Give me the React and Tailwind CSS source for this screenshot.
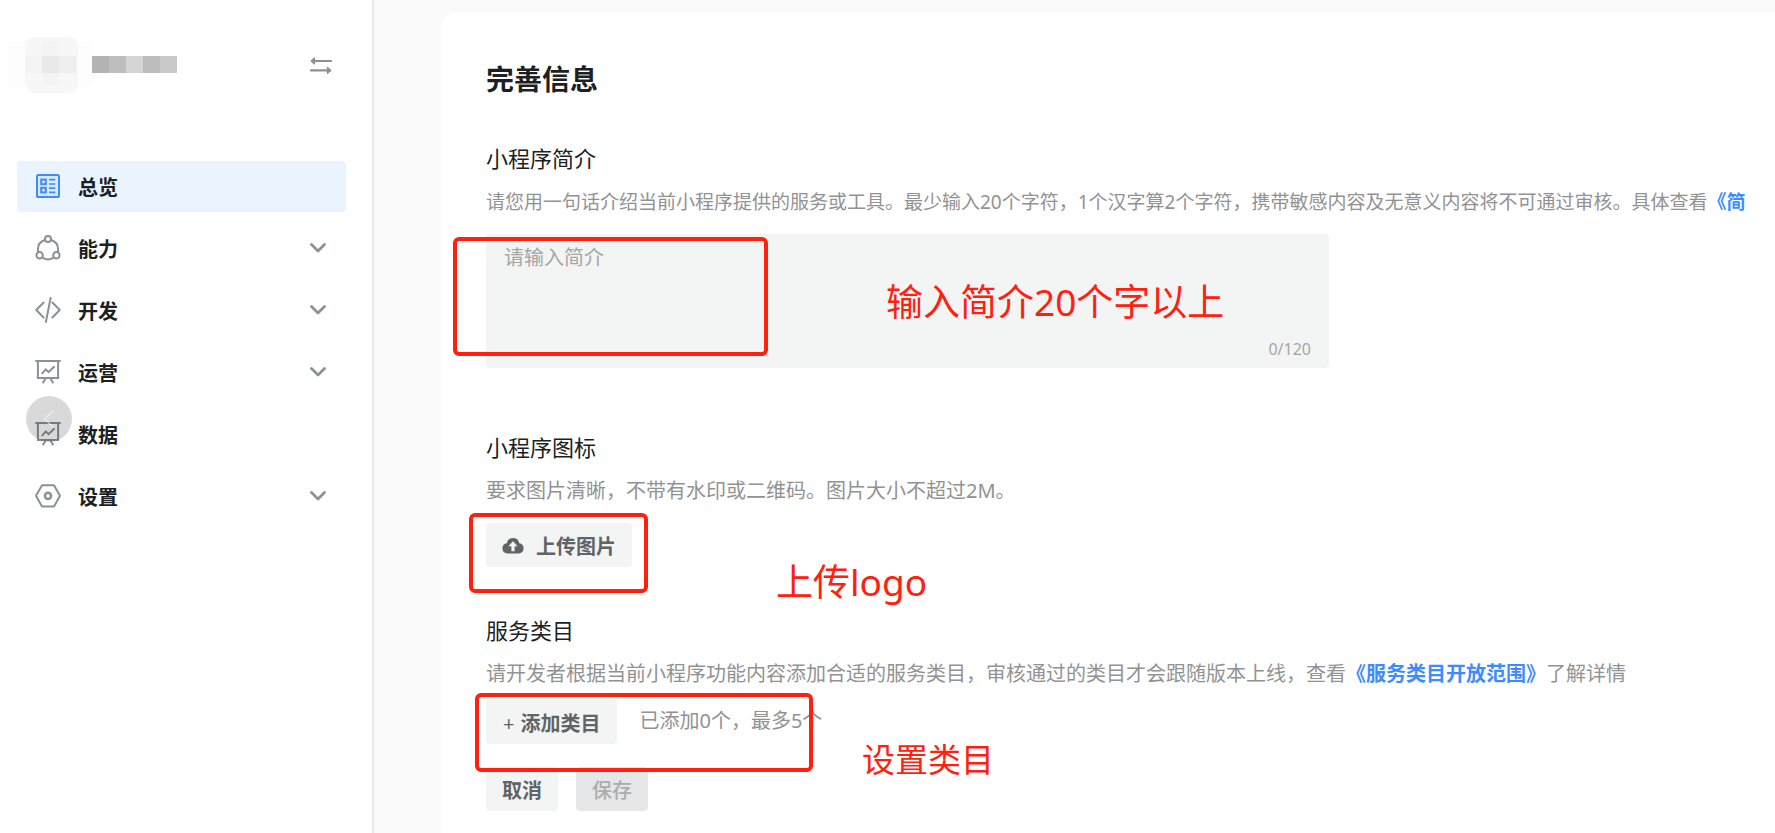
import React from "react";

function OverviewIcon() {
  return (
    <svg viewBox="0 0 26 26" className="mb-0.5 size-[26px] shrink-0 text-[#3d8bff]" fill="none" stroke="currentColor" strokeWidth="2" aria-hidden="true">
      <rect x="2" y="2" width="22" height="22" rx="1.600" fill="#d9eaff" />
      <rect x="6.200" y="6.600" width="4.600" height="4.600" />
      <rect x="6.200" y="14.800" width="4.600" height="4.600" />
      <path d="M14 6.600h6.400M14 11h6.400M14 15.200h6.400M14 19.400h6.400" strokeWidth="1.700" />
    </svg>
  );
}

function AbilityIcon() {
  return (
    <svg viewBox="0 0 26 26" className="mb-0.5 size-[26px] shrink-0" fill="none" stroke="currentColor" strokeWidth="2" aria-hidden="true">
      <circle cx="13" cy="4" r="3" />
      <circle cx="4.600" cy="20.200" r="3.200" />
      <circle cx="21.400" cy="20.200" r="3.200" />
      <path d="M10 5C5.500 6.500 3 10 3 13.500V17M16 5c4.500 1.500 7 5 7 8.500V17M7.500 22.600c3.500 2.300 7.500 2.300 11 0" />
    </svg>
  );
}

function CodeIcon() {
  return (
    <svg viewBox="0 0 26 26" className="mb-0.5 size-[26px] shrink-0" fill="none" stroke="currentColor" strokeWidth="2" strokeLinecap="round" strokeLinejoin="round" aria-hidden="true">
      <path d="M8.600 5.500 1.300 13l7.300 7.500M17.400 5.500l7.300 7.500-7.300 7.500M15.600 1l-4.700 24" />
    </svg>
  );
}

function BoardIcon() {
  return (
    <svg viewBox="0 0 26 26" className="mb-0.5 size-[26px] shrink-0" fill="none" stroke="currentColor" strokeWidth="2" aria-hidden="true">
      <path d="M.3 2h25.400M2.900 2v17h20.200V2M7.700 24.200l3-5M18.300 24.200l-3-5" />
      <path d="m6.800 14.800 4-4.400 2.800 2.800 6-6" />
    </svg>
  );
}

function SettingsIcon() {
  return (
    <svg viewBox="0 0 26 26" className="mb-0.5 size-[26px] shrink-0" fill="none" stroke="currentColor" strokeWidth="2" strokeLinejoin="round" aria-hidden="true">
      <path d="M7 2.200h12l6 10.600-6 10.600H7L1 12.800z" />
      <circle cx="13" cy="12.800" r="3.100" strokeWidth="2.500" />
    </svg>
  );
}

function ChevronDown() {
  return (
    <svg viewBox="0 0 16 10" className="mb-0.5 ml-auto h-[10px] w-4" fill="none" stroke="#8b9197" strokeWidth="2.800" strokeLinecap="round" strokeLinejoin="round" aria-hidden="true">
      <path d="M1.500 1.500 8 8l6.500-6.500" />
    </svg>
  );
}

const items = [
  { name: "总览", Icon: OverviewIcon, active: true },
  { name: "能力", Icon: AbilityIcon, more: true },
  { name: "开发", Icon: CodeIcon, more: true },
  { name: "运营", Icon: BoardIcon, more: true },
  { name: "数据", Icon: BoardIcon, collapse: true },
  { name: "设置", Icon: SettingsIcon, more: true },
];

function Sidebar() {
  return (
    <aside className="w-[374px] shrink-0 border-r-2 border-[#e7e8ec] bg-white">
      <div className="flex h-[161px] items-start pt-[37px] pl-2">
        <svg viewBox="0 0 84 56" className="h-[56px] w-[84px]" aria-hidden="true">
          <path d="M0 4h84v45H0z" fill="#fdfdfd" />
          <rect x="17" width="53" height="56" rx="9" fill="#f7f7f7" />
          <path d="M34 4h17v45H34z" fill="#f4f4f4" />
          <path d="M34 19h17v17H34z" fill="#e8e8e8" />
          <path d="M51 19h17v17H51z" fill="#efefef" />
          <path d="M17 19h17v17H17z" fill="#f4f4f4" />
        </svg>
        <svg viewBox="0 0 85 17" className="mt-[19px] h-[17px] w-[85px]" aria-hidden="true">
          <path d="M0 0h17v17H0z" fill="#b3b3b3" />
          <path d="M17 0h17v17H17z" fill="#bebebe" />
          <path d="M34 0h17v17H34z" fill="#d5d5d5" />
          <path d="M51 0h17v17H51z" fill="#bcbcbc" />
          <path d="M68 0h17v17H68z" fill="#c9c9c9" />
        </svg>
        <button type="button" aria-label="切换" className="mt-5 mr-10 ml-auto">
          <svg viewBox="0 0 22 18" className="h-[18px] w-[22px]" fill="none" stroke="#8b9197" strokeWidth="2.200" strokeLinecap="round" strokeLinejoin="round" aria-hidden="true">
            <path d="M2 4h19M1 13.400h19" />
            <path d="M4.500 1v6L1.200 4zM17.500 10.400v6l3.300-3z" fill="#8b9197" strokeWidth="1.200" />
          </svg>
        </button>
      </div>
      <nav className="flex flex-col gap-[11px] pr-[26px] pl-[17px]">
        {items.map(({ name, Icon, active, more, collapse }) => (
          <a
            key={name}
            href="#"
            className={
              active
                ? "relative flex h-[51px] items-center rounded bg-[#e9f4ff] pr-5 pl-[18px] text-[#8b9197]"
                : "relative flex h-[51px] items-center rounded pr-5 pl-[18px] text-[#8b9197]"
            }
          >
            <Icon />
            <span className="ml-[17px] pt-0.5 font-bold text-[#1c1f23]">{name}</span>
            {more && <ChevronDown />}
            {collapse && (
              <span className="absolute -top-[13px] left-[9px] flex size-[46px] items-center justify-center rounded-full bg-black/15">
                <svg viewBox="0 0 10 18" className="h-[18px] w-[10px]" fill="none" stroke="#fff" strokeWidth="1" aria-hidden="true">
                  <path d="M9.500.5.500 9l9 8.500" />
                </svg>
              </span>
            )}
          </a>
        ))}
      </nav>
    </aside>
  );
}

export default function App() {
  return (
    <div className="flex min-h-screen overflow-hidden bg-[#fafafa] font-['Noto_Sans','Noto_Sans_CJK_SC',sans-serif] text-[20px] leading-[28px] whitespace-nowrap text-[#929292]">
      <Sidebar />
      <main className="flex min-w-0 flex-1 pt-3 pl-[67px]">
        <form className="min-w-0 flex-1 rounded-tl-2xl bg-white pt-[47px] pl-[45px]">
          <h1 className="text-[28px] leading-[40px] font-bold text-[#1c1f23]">完善信息</h1>

          <section className="relative mt-[43px]">
            <label htmlFor="intro" className="block text-[22px] leading-[32px] text-[#1c1f23]">小程序简介</label>
            <p className="mt-[14px] text-[19px]">
              请您用一句话介绍当前小程序提供的服务或工具。最少输入20个字符，1个汉字算2个字符，携带敏感内容及无意义内容将不可通过审核。具体查看
              <a href="#" className="font-bold text-[#3d8bff]">《简</a>
            </p>
            <div className="relative mt-[18px] max-w-[843px]">
              <textarea id="intro" placeholder="请输入简介" className="block h-[134px] w-full resize-none rounded bg-[#f3f5f5] px-[18px] py-[10px] outline-none placeholder:text-[#a4a6a6]" />
              <span className="absolute right-[18px] bottom-[7px] text-[16px] leading-[24px] text-[#a4a6a6]">0/120</span>
            </div>
            <div className="absolute top-[95px] -left-[33px] h-[119px] w-[315px] rounded-md border-4 border-[#ff2010]" />
            <p className="absolute top-[133px] left-[400px] text-[37px] leading-[54px] text-[#ff2010]">输入简介20个字以上</p>
          </section>

          <section className="relative mt-[63px]">
            <label htmlFor="upload" className="block text-[22px] leading-[32px] text-[#1c1f23]">小程序图标</label>
            <p className="mt-[14px]">要求图片清晰，不带有水印或二维码。图片大小不超过2M。</p>
            <button id="upload" type="button" className="mt-[18px] flex h-11 items-center gap-3 rounded bg-[#f3f5f5] px-4 pt-1 font-bold text-[#606466]">
              <svg viewBox="0 0 22 18" className="mb-1 h-[18px] w-[22px]" aria-hidden="true">
                <path d="M5.300 17.500A5.200 5.200 0 0 1 4.700 7.200a6.400 6.400 0 0 1 12.600 0 5.200 5.200 0 0 1-.6 10.300z" fill="currentColor" />
                <path d="m11 5.300 4.600 4.900h-3v5H9.400v-5h-3z" fill="#f3f5f5" />
              </svg>
              上传图片
            </button>
            <div className="absolute top-[82px] -left-[17px] h-[80px] w-[179px] rounded-md border-4 border-[#ff2010]" />
            <p className="absolute top-[124px] left-[290px] text-[37px] leading-[54px] text-[#ff2010]">上传logo</p>
          </section>

          <section className="relative mt-[47px]">
            <label htmlFor="category" className="block text-[22px] leading-[32px] text-[#1c1f23]">服务类目</label>
            <p className="mt-[14px]">
              请开发者根据当前小程序功能内容添加合适的服务类目，审核通过的类目才会跟随版本上线，查看
              <a href="#" className="font-bold text-[#3d8bff]">《服务类目开放范围》</a>
              了解详情
            </p>
            <div className="mt-[11px] flex items-start gap-[22px]">
              <button id="category" type="button" className="flex h-[45px] items-center gap-[6px] rounded bg-[#f3f5f5] px-[17px] pt-1 font-bold text-[#606466]">
                <span className="font-normal">+</span>
                添加类目
              </button>
              <span className="mt-2">已添加0个，最多5个</span>
            </div>
            <div className="absolute top-[79px] -left-[11px] h-[79px] w-[338px] rounded-md border-4 border-[#ff2010]" />
            <p className="absolute top-[122px] left-[376px] text-[33px] leading-[48px] text-[#ff2010]">设置类目</p>
          </section>

          <div className="mt-[23px] flex gap-[18px]">
            <button type="button" className="h-11 rounded bg-[#f3f5f5] px-4 pt-1 font-bold text-[#606466]">取消</button>
            <button type="submit" disabled className="h-11 rounded bg-[#e5e7e8] px-4 pt-1 font-medium text-[#a9adb0]">保存</button>
          </div>
        </form>
      </main>
    </div>
  );
}
